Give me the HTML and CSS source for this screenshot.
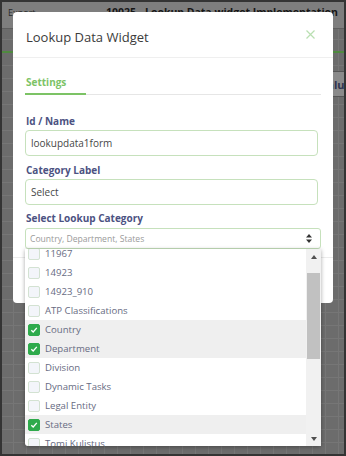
FILE: index.html
```html
<!DOCTYPE html>
<html lang="en">
<head>
    <meta charset="UTF-8">
    <meta name="viewport" content="width=device-width, initial-scale=1.0">
    <title>Lookup Data Widget</title>
    <link rel="stylesheet" href="styles.css">
</head>
<body>
    <div class="app">
        <div class="topbar">
            <span class="export">Export</span>
            <span class="doc-title">10025 - Lookup Data widget Implementation</span>
        </div>
        <div class="green-rule"></div>
        <div class="toolbar">
            <button class="value-btn">Value</button>
        </div>
    </div>

    <div class="modal">
        <div class="modal-header">
            <h2>Lookup Data Widget</h2>
            <svg class="close" width="9" height="9" viewBox="0 0 9 9">
                <path d="M0.5 0.5 L8.5 8.5 M8.5 0.5 L0.5 8.5" stroke="#b9dfb1" stroke-width="1.2" fill="none"/>
            </svg>
        </div>
        <div class="modal-body">
            <div class="tabs">
                <span class="tab active">Settings</span>
            </div>

            <label class="field-label first">Id / Name</label>
            <input type="text" class="field" value="lookupdata1form">

            <label class="field-label">Category Label</label>
            <input type="text" class="field" value="Select">

            <label class="field-label last">Select Lookup Category</label>
            <div class="select-wrap">
                <div class="select">
                    <span>Country, Department, States</span>
                    <svg width="6" height="9" viewBox="0 0 6 9">
                        <path d="M3 0 L6 3.5 L0 3.5 Z M3 9 L6 5.5 L0 5.5 Z" fill="#333"/>
                    </svg>
                </div>
                <div class="dropdown">
                    <div class="options">
                        <div class="options-inner" id="options"></div>
                    </div>
                    <div class="scrollbar">
                        <div class="arrow up"></div>
                        <div class="track"><div class="thumb"></div></div>
                        <div class="arrow down"></div>
                    </div>
                </div>
            </div>
        </div>
        <div class="modal-footer"></div>
    </div>

    <script>
        const categorias = [
            { nome: '11967', marcado: false },
            { nome: '14923', marcado: false },
            { nome: '14923_910', marcado: false },
            { nome: 'ATP Classifications', marcado: false },
            { nome: 'Country', marcado: true },
            { nome: 'Department', marcado: true },
            { nome: 'Division', marcado: false },
            { nome: 'Dynamic Tasks', marcado: false },
            { nome: 'Legal Entity', marcado: false },
            { nome: 'States', marcado: true },
            { nome: 'Tomi Kulistus', marcado: false }
        ];

        const lista = document.getElementById('options');
        categorias.forEach(cat => {
            let linha = document.createElement('div');
            linha.className = 'option' + (cat.marcado ? ' checked' : '');
            let caixa = document.createElement('span');
            caixa.className = 'box';
            if (cat.marcado) {
                caixa.innerHTML = '<svg width="8" height="8" viewBox="0 0 8 8"><path d="M1.3 4.2 L3.2 6 L6.8 1.9" stroke="#fff" stroke-width="1.3" fill="none"/></svg>';
            }
            let texto = document.createElement('span');
            texto.textContent = cat.nome;
            linha.appendChild(caixa);
            linha.appendChild(texto);
            lista.appendChild(linha);
        });
    </script>
</body>
</html>
```

FILE: styles.css
```css
* {
    box-sizing: border-box;
}
body {
    margin: 0;
    width: 346px;
    height: 456px;
    overflow: hidden;
    position: relative;
    font-family: "Open Sans", Arial, sans-serif;
    background-color: #6c6c6c;
    background-image:
        repeating-linear-gradient(0deg, #767676 0 1px, transparent 1px 13px),
        repeating-linear-gradient(90deg, #767676 0 1px, transparent 1px 13px);
    border: 2px solid #343434;
}
.app {
    height: 100%;
}
.topbar {
    height: 27px;
    background: #7e7e7e;
    border-bottom: 1px solid #5e5e5e;
    display: flex;
    align-items: center;
    padding: 0 6px 6px 6px;
    font-size: 9px;
    color: #2a2a2a;
    white-space: nowrap;
    overflow: hidden;
}
.export {
    width: 164px;
}
.doc-title {
    font-weight: bold;
    font-size: 10.5px;
    color: #161616;
}
.green-rule {
    margin-top: 22px;
    height: 2px;
    background: #4f8a3f;
}
.toolbar {
    display: flex;
    justify-content: flex-end;
    margin-top: 18px;
}
.value-btn {
    margin-right: -14px;
    height: 26px;
    padding: 0 6px;
    background: #8a8a8a;
    border: 1px solid #555;
    font-family: inherit;
    font-weight: bold;
    font-size: 11px;
    color: #2e3550;
}

.modal {
    position: absolute;
    left: 11px;
    top: 10px;
    width: 320px;
    height: 291px;
    background: white;
    border-radius: 4px;
}
.modal-header {
    height: 46px;
    display: flex;
    justify-content: space-between;
    align-items: center;
    padding: 0 18px 0 13px;
    border-bottom: 1px solid #efefef;
}
.modal-header h2 {
    margin: 4px 0 0 0;
    font-size: 13px;
    font-weight: normal;
    color: #3b3b3b;
}
.close {
    margin-top: -1px;
}
.modal-body {
    padding: 0 12px;
}
.tabs {
    padding-top: 17px;
    border-bottom: 1px solid #e6e6e6;
    display: flex;
}
.tab {
    font-size: 10px;
    line-height: 14px;
    font-weight: bold;
    color: #7cc365;
    padding: 0 20px 4px 1px;
    border-bottom: 2px solid #7cc365;
    margin-bottom: -1px;
}
.field-label {
    display: block;
    font-size: 10px;
    line-height: 14px;
    font-weight: bold;
    color: #4c5282;
    margin: 7px 0 2px 1px;
}
.field-label.first {
    margin-top: 19px;
}
.field-label.last {
    margin-top: 6px;
    margin-bottom: 3px;
}
.field {
    display: block;
    width: 293px;
    height: 26px;
    border: 1px solid #c6e1bc;
    border-radius: 4px;
    padding: 0 5px;
    font-family: inherit;
    font-size: 10px;
    color: #474747;
    outline: none;
}
.select-wrap {
    position: relative;
}
.select {
    width: 296px;
    height: 21px;
    border: 1px solid #c6e1bc;
    border-radius: 3px;
    padding: 0 8px 0 4px;
    display: flex;
    justify-content: space-between;
    align-items: center;
    font-size: 8.6px;
    color: #9a9a9a;
}
.dropdown {
    position: absolute;
    top: 100%;
    left: 0;
    width: 296px;
    height: 197px;
    background: white;
    display: flex;
    box-shadow: 0 1px 4px rgba(0,0,0,0.35);
    border-radius: 0 0 3px 3px;
    z-index: 2;
}
.options {
    flex: 1;
    overflow: hidden;
}
.options-inner {
    margin-top: -5px;
}
.option {
    height: 19px;
    display: flex;
    align-items: center;
    gap: 5px;
    padding-left: 3px;
    font-size: 9.6px;
    color: #676b82;
}
.option.checked {
    background: #efefef;
}
.box {
    width: 12px;
    height: 12px;
    border: 1px solid #d3e2d2;
    border-radius: 2px;
    background: #f3f5fa;
    display: flex;
    align-items: center;
    justify-content: center;
}
.option.checked .box {
    background: #2eaa4b;
    border-color: #2eaa4b;
}
.scrollbar {
    width: 15px;
    background: #f1f1f1;
    display: flex;
    flex-direction: column;
}
.arrow {
    height: 15px;
    display: flex;
    align-items: center;
    justify-content: center;
}
.arrow::after {
    content: "";
    border-left: 3.5px solid transparent;
    border-right: 3.5px solid transparent;
}
.arrow.up::after {
    border-bottom: 4px solid #505050;
}
.arrow.down::after {
    border-top: 4px solid #505050;
}
.track {
    flex: 1;
    padding: 9px 1px 0 1px;
}
.thumb {
    height: 86px;
    background: #c1c1c1;
}
.modal-footer {
    margin-top: 8px;
    border-top: 1px solid #ececec;
}
```
